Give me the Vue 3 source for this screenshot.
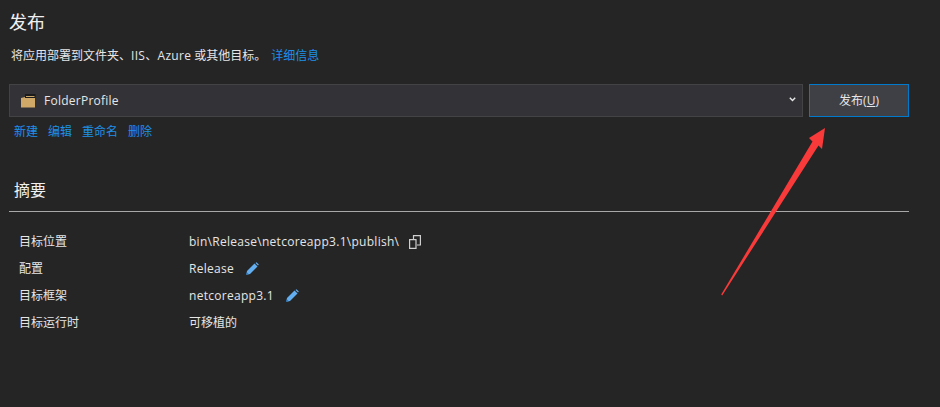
<script setup>
const rows = [
  { label: '目标位置', value: 'bin\\Release\\netcoreapp3.1\\publish\\', icon: 'copy', latin: true },
  { label: '配置', value: 'Release', icon: 'edit', latin: true },
  { label: '目标框架', value: 'netcoreapp3.1', icon: 'edit', latin: true },
  { label: '目标运行时', value: '可移植的', icon: '', latin: false },
]
const links = ['新建', '编辑', '重命名', '删除']
</script>

<template>
  <div class="page">
    <h1 class="title">发布</h1>
    <p class="sub">将应用部署到文件夹、<span class="wide">IIS、Azure</span> 或其他目标。<a class="detail">详细信息</a></p>

    <div class="bar">
      <div class="select">
        <svg class="folder" width="16" height="14" viewBox="0 0 16 14">
          <path d="M5 0H15.5V4H5Z" fill="#1b1b1c" />
          <path d="M6 2H14.5V3H6Z" fill="#c9a468" />
          <path d="M1 4L5 3V4H15V13.5H1Z" fill="#d0a868" />
        </svg>
        <span class="profile">FolderProfile</span>
        <svg class="chev" width="7" height="5" viewBox="0 0 7 5">
          <path d="M0.8 0.8L3.5 3.6L6.2 0.8" fill="none" stroke="#e8e8e8" stroke-width="1.4" />
        </svg>
      </div>
      <button class="publish">发布(<span class="ul">U</span>)</button>
    </div>

    <nav class="links">
      <a v-for="l in links" :key="l">{{ l }}</a>
    </nav>

    <h2 class="summary">摘要</h2>
    <div class="rule"></div>

    <div class="grid">
      <div v-for="r in rows" :key="r.label" class="row">
        <span class="label">{{ r.label }}</span>
        <span :class="{ latin: r.latin }">{{ r.value }}</span>
        <svg v-if="r.icon === 'copy'" class="copy" width="12" height="14" viewBox="0 0 12 14">
          <path d="M4.5 4V0.6H11.4V10H8" fill="none" stroke="#cfcfcf" stroke-width="1.2" />
          <path d="M0.6 4.6H7V13.4H0.6Z" fill="none" stroke="#cfcfcf" stroke-width="1.2" />
        </svg>
        <svg v-if="r.icon === 'edit'" class="edit" width="13" height="13" viewBox="0 0 13 13">
          <path d="M0.3 12.7L1 9L8.5 1.5L11.5 4.5L4 12Z" fill="#62aef0" />
          <path d="M9.5 1L10.5 0.2L12.8 2.5L12 3.5Z" fill="#62aef0" />
          <path d="M0.3 12.7L0.8 10.2L2.8 12.2Z" fill="#2a7cc4" />
        </svg>
      </div>
    </div>

    <svg class="arrow" width="110" height="172" viewBox="0 0 110 172">
      <path d="M0.2 166.5L91.5 13.5L88 10L104 0L101 21L97.5 17.5L1.2 167.5Z" fill="#f83a3a" />
    </svg>
  </div>
</template>

<style scoped>
.page {
  position: relative;
  width: 940px;
  height: 407px;
  box-sizing: border-box;
  overflow: hidden;
  padding: 10px 31px 0 9px;
  background: #252526;
  color: #e6e6e6;
  font: 12px/16px "Open Sans", "Noto Sans CJK SC", sans-serif;
}
.title {
  margin: 0;
  font-size: 18px;
  line-height: 24px;
  font-weight: 400;
  color: #f0f0f0;
}
.sub {
  margin: 14px 0 0 2px;
  height: 16px;
}
.wide {
  letter-spacing: 0.3px;
}
.detail {
  margin-left: 5px;
  color: #1e90e8;
}
.bar {
  display: flex;
  gap: 6px;
  margin-top: 20px;
  height: 33px;
}
.select {
  flex: 1;
  display: flex;
  align-items: center;
  box-sizing: border-box;
  padding: 0 6px 0 10px;
  background: #333337;
  border: 1px solid #434346;
}
.profile {
  margin-left: 8px;
  flex: 1;
  letter-spacing: 0.25px;
}
.chev {
  margin-bottom: 2px;
}
.publish {
  width: 100px;
  padding: 0;
  box-sizing: border-box;
  background: #3f3f46;
  border: 1px solid #007acc;
  color: #e6e6e6;
  font: inherit;
}
.ul {
  text-decoration: underline;
}
.links {
  display: flex;
  gap: 10px;
  margin: 7px 0 0 5px;
  color: #1e90e8;
}
.summary {
  margin: 39px 0 0 5px;
  font-size: 16px;
  line-height: 22px;
  font-weight: 400;
  color: #f0f0f0;
}
.rule {
  height: 1px;
  margin-top: 10px;
  background: #a8a8a8;
}
.grid {
  margin: 16px 0 0 10px;
}
.row {
  display: flex;
  align-items: center;
  height: 27px;
}
.label {
  width: 170px;
  flex: none;
}
.latin {
  letter-spacing: 0.28px;
}
.copy {
  margin-left: 10px;
}
.edit {
  margin-left: 12px;
}
.arrow {
  position: absolute;
  left: 721px;
  top: 128px;
}
</style>
